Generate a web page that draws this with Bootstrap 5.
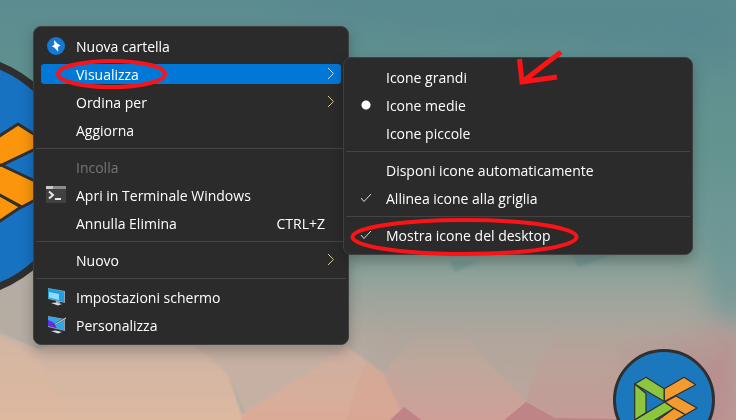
<!DOCTYPE html>
<html lang="it" data-bs-theme="dark">
<head>
<meta charset="utf-8">
<meta name="viewport" content="width=device-width, initial-scale=1">
<title>Desktop</title>
<link rel="stylesheet" href="https://cdn.jsdelivr.net/npm/bootstrap@5.3.0/dist/css/bootstrap.min.css">
<style>
  body { font-family: "Open Sans", "Noto Sans", sans-serif; font-size: 14px; line-height: 20px; background: #6f9894; }
  .wallpaper { z-index: 0; }
  .ctx { background: #2b2b2b; border: 1px solid #404040; border-radius: 8px; padding: 5px 0; color: #fff; box-shadow: 0 6px 14px rgba(0,0,0,.25); }
  .ctx-main { left: 33px; top: 26px; min-width: 316px; z-index: 1; }
  .ctx-sub { left: 309px; top: 30px; min-width: 350px; z-index: 2; }
  .entry { display: flex; align-items: center; height: 20px; margin: 4px 7px; padding: 0 6px 0 5px; border: 0; border-radius: 3px; background: none; color: #fff; line-height: 22px; text-align: left; white-space: nowrap; cursor: default; }
  .entry.current { background: #0078d7; }
  .entry:disabled { color: #767676; }
  .entry-text { padding-top: 1px; }
  .entry-icon { width: 20px; height: 20px; flex: none; margin-right: 10px; }
  .entry-key { margin-right: 10px; }
  .rule { height: 1px; margin: 4px 2px; background: #444; border: 0; opacity: 1; }
  .tick { appearance: none; width: 20px; height: 20px; flex: none; margin: 0 10px 0 0; background: none center no-repeat; }
  .tick[type=radio]:checked { background-image: radial-gradient(circle, #fff 4px, transparent 5px); }
  .tick[type=checkbox]:checked { background-image: url("data:image/svg+xml,%3Csvg xmlns='http://www.w3.org/2000/svg' width='12' height='12'%3E%3Cpath d='M1 6l3 3.5L11 2' fill='none' stroke='%23d8e0e0'/%3E%3C/svg%3E"); }
  .notes { z-index: 3; pointer-events: none; }
</style>
<script src="https://cdn.jsdelivr.net/npm/bootstrap@5.3.0/dist/js/bootstrap.bundle.min.js"></script>
</head>
<body>
<main class="position-relative vh-100 overflow-hidden">
  <svg class="wallpaper position-absolute top-0 start-0 w-100 h-100" viewBox="0 0 736 420" preserveAspectRatio="xMinYMin slice" aria-hidden="true">
    <defs>
      <linearGradient id="sky" x2="0" y2="1">
        <stop offset="0" stop-color="#5c8c90"/><stop offset=".45" stop-color="#67968f"/>
        <stop offset=".6" stop-color="#7f9e96"/><stop offset=".7" stop-color="#9ba59b"/><stop offset=".8" stop-color="#b0a69d"/><stop offset="1" stop-color="#c0a69c"/>
      </linearGradient>
      <linearGradient id="peach" x2="0" y2="1"><stop offset="0" stop-color="#cab4a6"/><stop offset="1" stop-color="#dfb9a0"/></linearGradient>
      <linearGradient id="coral" x2="0" y2="1"><stop offset="0" stop-color="#cbb0a2"/><stop offset=".6" stop-color="#d7ae9b"/><stop offset="1" stop-color="#dcaa97"/></linearGradient>
      <linearGradient id="hill" x2="0" y2="1"><stop offset="0" stop-color="#b8a79d" stop-opacity="0"/><stop offset=".4" stop-color="#c2a79b" stop-opacity=".8"/><stop offset="1" stop-color="#cf9f97"/></linearGradient>
      <linearGradient id="rose" x2="0" y2="1"><stop offset="0" stop-color="#b3a199" stop-opacity="0"/><stop offset=".4" stop-color="#bba198" stop-opacity=".8"/><stop offset="1" stop-color="#c59a96"/></linearGradient>
      <filter id="soft"><feGaussianBlur stdDeviation="1"/></filter>
      <filter id="haze" x="-30%" y="-30%" width="160%" height="160%"><feGaussianBlur stdDeviation="14"/></filter>
    </defs>
    <rect width="736" height="420" fill="url(#sky)"/>
    <path d="M-30 250H90L350 330 420 440H-30z" fill="#b5ada3" filter="url(#haze)"/>
    <path d="M280 0H740V70L560 45 300 16z" fill="#528391" opacity=".4" filter="url(#haze)"/>
    <path d="M690 180L750 180V325L715 315z" fill="#6b9696" opacity=".8" filter="url(#haze)"/>
    <path d="M630 360L740 330V440H610z" fill="#b88a8d" opacity=".8" filter="url(#haze)"/>
    <g filter="url(#soft)">
      <path d="M-5 331L40 350 70 333H180L228 374 245 425H-5z" fill="url(#peach)"/>
      <path d="M-5 334L40 360 68 425H-5z" fill="#e0bba0" opacity=".3"/>
      <path d="M180 333L228 374 245 412 335 355 345 340z" fill="#c6b0a3"/>
      <path d="M242 414L335 355 345 345 383 373 410 425H240z" fill="url(#coral)"/>
      <path d="M345 425L357 385 366 362 383 373 407 425z" fill="#d6a18f" opacity=".4"/>
      <path d="M383 373L425 325 455 325 495 370 526 402 530 425H407z" fill="url(#hill)"/>
      <path d="M526 400L555 320H620L640 350V425H530z" fill="url(#rose)"/>
      <path d="M615 345L650 334 715 336 725 350 700 372H620z" fill="#b39d99" opacity=".4"/>
      <path d="M450 261H480L455 272zM572 254H615L578 267z" fill="#6f9591" opacity=".8"/>
    </g>
    <path d="M502 422L526 402 555 418 620 419V422zM388 422L404 407 424 422z" fill="#bf8485"/>

    <g stroke="#302f2f">
      <circle cx="-45" cy="176" r="119" fill="#1772c2" stroke-width="7"/>
      <g fill="#fb960c" stroke-width="3" stroke-linejoin="round">
        <path d="M18 124L48 143 0 166-30 183V155z"/>
        <path d="M-30 177L21 207-30 241z"/>
        <path d="M1 165L54 190 22 207-30 179z"/>
      </g>
      <circle cx="664" cy="400" r="49.5" fill="#1b78bd" stroke-width="3"/>
      <g stroke-width="1.2" stroke-linejoin="round">
        <g fill="#8bc63e">
          <path d="M634.7 384L646 377.3 664.3 388.7V401.5z"/>
          <path d="M634.7 384L646 393.5V412.7L634.7 420z"/>
          <path d="M634.7 420L664.7 402 674 408.3 645 426H634.7z"/>
        </g>
        <g fill="#f39a31">
          <path d="M664.3 388.7L684 377.3 695.7 384.7 664.3 401.5z"/>
          <path d="M665 402L676 396 697 408 685.3 414.7 672 407z"/>
          <path d="M674 408.3L685.3 414.7 666 426H650z"/>
        </g>
      </g>
    </g>
  </svg>

  <div class="ctx ctx-main position-absolute d-flex flex-column" role="menu" aria-label="Desktop">
    <button type="button" class="entry" role="menuitem">
      <svg class="entry-icon" viewBox="0 0 20 20" aria-hidden="true"><circle cx="10" cy="10" r="9" fill="#1478d4"/><path d="M8 4L11.800 8 14.500 9.200 12 11.200 12.200 15.800 8.500 11.800 5.800 10.200 8.300 8.800z" fill="#fff"/></svg>
      <span class="entry-text">Nuova cartella</span>
    </button>
    <button type="button" class="entry current" role="menuitem" aria-haspopup="true" aria-expanded="true">
      <span class="entry-icon"></span><span class="entry-text">Visualizza</span>
      <svg class="ms-auto" width="8" height="12" viewBox="0 0 8 12" aria-hidden="true"><path d="M1 0L6.500 5.500 1 11" fill="none" stroke="#c9dcf0"/></svg>
    </button>
    <button type="button" class="entry" role="menuitem" aria-haspopup="true">
      <span class="entry-icon"></span><span class="entry-text">Ordina per</span>
      <svg class="ms-auto" width="8" height="12" viewBox="0 0 8 12" aria-hidden="true"><path d="M1 0L6.500 5.500 1 11" fill="none" stroke="#d3c9a0"/></svg>
    </button>
    <button type="button" class="entry" role="menuitem"><span class="entry-icon"></span><span class="entry-text">Aggiorna</span></button>
    <hr class="rule">
    <button type="button" class="entry" role="menuitem" disabled><span class="entry-icon"></span><span class="entry-text">Incolla</span></button>
    <button type="button" class="entry" role="menuitem">
      <svg class="entry-icon" viewBox="0 0 20 20" aria-hidden="true"><path d="M0 2H20V18H0z" fill="#414141"/><path d="M0 1H20V4H0z" fill="#8b8b8b"/><path d="M0 1H7V4H0z" fill="#c9c9c9"/><path d="M3 6.500L7 10 3 13.500" fill="none" stroke="#e8e8e8" stroke-width="2"/><path d="M9 14H15" stroke="#e8e8e8" stroke-width="2"/></svg>
      <span class="entry-text">Apri in Terminale Windows</span>
    </button>
    <button type="button" class="entry" role="menuitem"><span class="entry-icon"></span><span class="entry-text">Annulla Elimina</span><span class="entry-text entry-key ms-auto">CTRL+Z</span></button>
    <hr class="rule">
    <button type="button" class="entry" role="menuitem" aria-haspopup="true">
      <span class="entry-icon"></span><span class="entry-text">Nuovo</span>
      <svg class="ms-auto" width="8" height="12" viewBox="0 0 8 12" aria-hidden="true"><path d="M1 0L6.500 5.500 1 11" fill="none" stroke="#d3c9a0"/></svg>
    </button>
    <hr class="rule">
    <button type="button" class="entry" role="menuitem">
      <svg class="entry-icon" viewBox="0 0 20 20" aria-hidden="true"><path d="M10 13L14 14V16H10z" fill="#8fa3ad"/><path d="M5 16L10 15.500 16 17 12 18.500z" fill="#d6dee2"/><path d="M2 1L19 4V16L2 12z" fill="#8ba3ae"/><path d="M2 1.500L18 4.500V15L2 11z" fill="#1f9ee6"/><path d="M3 5L13 7V13L3 10.500z" fill="#8ddcff"/></svg>
      <span class="entry-text">Impostazioni schermo</span>
    </button>
    <button type="button" class="entry" role="menuitem">
      <svg class="entry-icon" viewBox="0 0 20 20" aria-hidden="true"><path d="M5 16L10 15.500 16 17 12 18.500z" fill="#d6dee2"/><path d="M2 1L19 4V16L2 12z" fill="#8ba3ae"/><path d="M2 1.500L18 4.500V15L2 11z" fill="#2fa6ea"/><path d="M2 5L7 7 11 13.300 2 11z" fill="#6a2be0"/><path d="M19 3.500L8 10" stroke="#3a3f46" stroke-width="2"/><path d="M20 3L9 9.500" stroke="#b8c2c8" stroke-width="1.200"/></svg>
      <span class="entry-text">Personalizza</span>
    </button>

    <div class="ctx ctx-sub position-absolute d-flex flex-column" role="group" aria-label="Visualizza">
      <label class="entry"><input class="tick" type="radio" name="size"><span class="entry-text">Icone grandi</span></label>
      <label class="entry"><input class="tick" type="radio" name="size" checked><span class="entry-text">Icone medie</span></label>
      <label class="entry"><input class="tick" type="radio" name="size"><span class="entry-text">Icone piccole</span></label>
      <hr class="rule">
      <label class="entry"><input class="tick" type="checkbox"><span class="entry-text">Disponi icone automaticamente</span></label>
      <label class="entry"><input class="tick" type="checkbox" checked><span class="entry-text">Allinea icone alla griglia</span></label>
      <hr class="rule">
      <label class="entry"><input class="tick" type="checkbox" checked><span class="entry-text">Mostra icone del desktop</span></label>
    </div>
  </div>

  <svg class="notes position-absolute top-0 start-0" width="736" height="420" fill="none" stroke="#fb1417" stroke-width="4" aria-hidden="true">
    <ellipse cx="111.500" cy="74" rx="53.500" ry="13"/>
    <ellipse cx="464.500" cy="237" rx="112" ry="17"/>
    <path d="M561 52L522 82M519.500 59L522 82 557 77" stroke-width="5"/>
  </svg>
</main>
</body>
</html>
